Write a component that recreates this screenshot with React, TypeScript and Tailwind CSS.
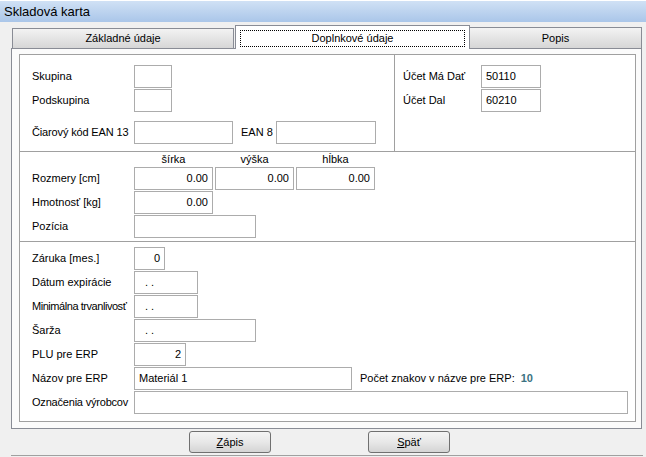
const font = { fontFamily: '"Liberation Sans", Arial, sans-serif' };

function Box({
  w,
  children,
  right,
  className = "",
}: {
  w: string;
  children?: React.ReactNode;
  right?: boolean;
  className?: string;
}) {
  return (
    <div
      className={`h-[23px] shrink-0 border border-[#acacac] bg-white flex items-center px-[4px] text-[11px] text-black ${
        right ? "justify-end" : ""
      } ${w} ${className}`}
    >
      {children}
    </div>
  );
}

function Row({
  label,
  labelW = "w-[102px]",
  labelClass = "",
  children,
}: {
  label: string;
  labelW?: string;
  labelClass?: string;
  children?: React.ReactNode;
}) {
  return (
    <div className="flex items-center h-[23px]">
      <div className={`${labelW} shrink-0 text-[11px] whitespace-nowrap ${labelClass}`}>{label}</div>
      {children}
    </div>
  );
}

function Button({ first, rest }: { first: string; rest: string }) {
  return (
    <div className="w-[82px] h-[22px] rounded-[3px] border border-[#707070] bg-gradient-to-b from-[#f4f4f4] via-[#e8e8e8] to-[#d4d4d4] flex items-center justify-center text-[11px]">
      <span>
        <span className="underline">{first}</span>
        {rest}
      </span>
    </div>
  );
}

export default function App() {
  return (
    <div className="w-[646px] h-[457px] bg-[#f0f0f0] text-black overflow-hidden" style={font}>
      {/* title bar */}
      <div className="h-[22px] border-t border-white bg-gradient-to-b from-[#d0e1f5] to-[#aac6e9] flex items-center pl-[4px] text-[13px]">
        Skladová karta
      </div>

      {/* tabs */}
      <div className="ml-[11px] w-[632px] h-[26px] flex items-end">
        <div className="ml-[1px] w-[222px] h-[20px] border border-b-0 border-[#898c95] bg-gradient-to-b from-[#f3f3f3] to-[#d6d6d6] flex items-center justify-center text-[11px]">
          Základné údaje
        </div>
        <div className="ml-[1px] w-[235px] h-[24px] -mb-[1px] relative z-10 border border-b-0 border-[#898c95] bg-white flex items-center justify-center px-[4px] pt-[1px]">
          <div className="w-full h-[17px] border border-dotted border-black flex items-center justify-center text-[11px]">
            Doplnkové údaje
          </div>
        </div>
        <div className="w-[172px] h-[21px] border border-b-0 border-l-0 border-[#898c95] bg-gradient-to-b from-[#f3f3f3] to-[#d6d6d6] flex items-center justify-center text-[11px]">
          Popis
        </div>
      </div>

      {/* panel */}
      <div className="ml-[11px] w-[631px] h-[381px] border border-[#898c95] bg-[#fbfbfb] pt-[5px] pl-[7px]">
        <div className="w-[617px] h-[368px] border border-[#a0a0a0] bg-white flex flex-col">
          {/* section 1 */}
          <div className="flex h-[97px] border-b border-[#a0a0a0]">
            <div className="w-[375px] border-r border-[#a0a0a0] pl-[12px] pt-[10px] flex flex-col gap-[1px]">
              <Row label="Skupina">
                <Box w="w-[38px]" />
              </Row>
              <Row label="Podskupina">
                <Box w="w-[38px]" />
              </Row>
              <div className="mt-[8px]">
                <Row label="Čiarový kód EAN 13" labelClass="tracking-[-0.15px]">
                  <Box w="w-[99px]" />
                  <div className="ml-[8px] w-[35px] text-[11px]">EAN 8</div>
                  <Box w="w-[100px]" />
                </Row>
              </div>
            </div>
            <div className="flex-1 pl-[8px] pt-[10px] flex flex-col gap-[1px]">
              <Row label="Účet Má Dať" labelW="w-[78px]">
                <Box w="w-[60px]">50110</Box>
              </Row>
              <Row label="Účet Dal" labelW="w-[78px]">
                <Box w="w-[60px]">60210</Box>
              </Row>
            </div>
          </div>

          {/* section 2 */}
          <div className="h-[90px] border-b border-[#a0a0a0] pl-[12px] flex flex-col">
            <div className="h-[15px] flex items-center text-[11px]">
              <div className="w-[102px]" />
              <div className="w-[79px] text-center">šírka</div>
              <div className="ml-[2px] w-[79px] text-center">výška</div>
              <div className="ml-[2px] w-[79px] text-center">hĺbka</div>
            </div>
            <div className="flex flex-col gap-[1px]">
              <Row label="Rozmery [cm]">
                <Box w="w-[79px]" right>0.00</Box>
                <Box w="w-[79px] ml-[2px]" right>0.00</Box>
                <Box w="w-[79px] ml-[2px]" right>0.00</Box>
              </Row>
              <Row label="Hmotnosť [kg]">
                <Box w="w-[79px]" right>0.00</Box>
              </Row>
              <Row label="Pozícia">
                <Box w="w-[122px]" />
              </Row>
            </div>
          </div>

          {/* section 3 */}
          <div className="flex-1 pl-[12px] pt-[5px] flex flex-col gap-[1px]">
            <Row label="Záruka [mes.]">
              <Box w="w-[31px]" right>0</Box>
            </Row>
            <Row label="Dátum expirácie">
              <Box w="w-[64px]" className="pl-[10px]">. .</Box>
            </Row>
            <Row label="Minimálna trvanlivosť" labelClass="tracking-[-0.45px]">
              <Box w="w-[64px]" className="pl-[10px]">. .</Box>
            </Row>
            <Row label="Šarža">
              <Box w="w-[122px]" className="pl-[10px]">. .</Box>
            </Row>
            <Row label="PLU pre ERP">
              <Box w="w-[52px]" right>2</Box>
            </Row>
            <Row label="Názov pre ERP">
              <Box w="w-[218px]">Materiál 1</Box>
              <div className="ml-[8px] text-[11px] whitespace-nowrap">
                Počet znakov v názve pre ERP:
                <span className="ml-[6px] font-bold text-[#3b7282]">10</span>
              </div>
            </Row>
            <Row label="Označenia výrobcov" labelClass="tracking-[-0.2px]">
              <Box w="w-[494px]" />
            </Row>
          </div>
        </div>
      </div>

      {/* buttons */}
      <div className="ml-[11px] w-[632px] h-[27px] border-b border-[#a0a0a0] pt-[2px] flex">
        <div className="ml-[178px]">
          <Button first="Z" rest="ápis" />
        </div>
        <div className="ml-[97px]">
          <Button first="S" rest="päť" />
        </div>
      </div>
    </div>
  );
}
